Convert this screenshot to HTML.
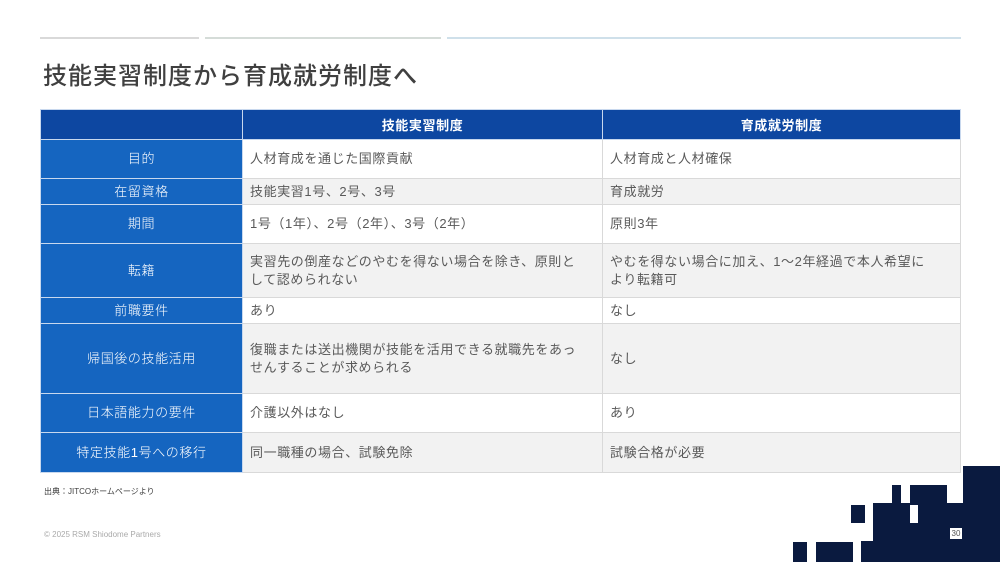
<!DOCTYPE html>
<html><head><meta charset="utf-8"><style>
*{margin:0;padding:0;box-sizing:border-box}
body{width:1000px;height:562px;overflow:hidden;background:#fff;position:relative;font-family:"Liberation Sans","Noto Sans CJK JP",sans-serif}
.ln{position:absolute;top:37px;height:2px}
h1{position:absolute;left:43px;top:56px;font-size:24px;font-weight:500;color:#404040;letter-spacing:1px}
table{position:absolute;left:40px;top:109px;border-collapse:collapse;width:921px;font-size:13px;color:#595959;letter-spacing:0.6px}
td{border:1px solid #d9d9d9;padding:0 7px;line-height:18px;font-weight:normal}
th{background:#0d47a1;color:#fff;font-weight:bold;font-size:13px;height:30px;border:1px solid #c8d8ee}
tr.g td{background:#f2f2f2}
tr td.h{background:#1565c0;color:#fff;text-align:center;width:202px;border-color:#c8d8ee;font-weight:300}
.n{position:absolute;background:#0a1a3f}
</style></head><body>
<div class="ln" style="left:40px;width:159px;background:#d9d9d9"></div>
<div class="ln" style="left:205px;width:236px;background:#d5dcd8"></div>
<div class="ln" style="left:447px;width:514px;background:#cfe0ea"></div>
<h1>技能実習制度から育成就労制度へ</h1>
<table>
<tr><th style="width:202px"></th><th style="width:360px">技能実習制度</th><th>育成就労制度</th></tr>
<tr style="height:39px"><td class="h">目的</td><td>人材育成を通じた国際貢献</td><td>人材育成と人材確保</td></tr>
<tr class="g" style="height:26px"><td class="h">在留資格</td><td>技能実習1号、2号、3号</td><td>育成就労</td></tr>
<tr style="height:39px"><td class="h">期間</td><td>1号（1年）、2号（2年）、3号（2年）</td><td>原則3年</td></tr>
<tr class="g" style="height:54px"><td class="h">転籍</td><td>実習先の倒産などのやむを得ない場合を除き、原則と<br>して認められない</td><td>やむを得ない場合に加え、1〜2年経過で本人希望に<br>より転籍可</td></tr>
<tr style="height:26px"><td class="h">前職要件</td><td>あり</td><td>なし</td></tr>
<tr class="g" style="height:70px"><td class="h">帰国後の技能活用</td><td>復職または送出機関が技能を活用できる就職先をあっ<br>せんすることが求められる</td><td>なし</td></tr>
<tr style="height:39px"><td class="h">日本語能力の要件</td><td>介護以外はなし</td><td>あり</td></tr>
<tr class="g" style="height:40px"><td class="h">特定技能1号への移行</td><td>同一職種の場合、試験免除</td><td>試験合格が必要</td></tr>
</table>
<div style="position:absolute;left:44px;top:486px;font-size:8px;color:#404040">出典：JITCOホームページより</div>
<div style="position:absolute;left:44px;top:530px;font-size:8px;color:#aaa">© 2025 RSM Shiodome Partners</div>
<div class="n" style="left:963px;top:466px;width:37px;height:40px"></div>
<div class="n" style="left:892px;top:485px;width:9px;height:20px"></div>
<div class="n" style="left:910px;top:485px;width:37px;height:20px"></div>
<div class="n" style="left:873px;top:503px;width:127px;height:40px"></div>
<div style="position:absolute;left:910px;top:505px;width:8px;height:18px;background:#fff"></div>
<div class="n" style="left:851px;top:505px;width:14px;height:18px"></div>
<div class="n" style="left:861px;top:541px;width:139px;height:21px"></div>
<div class="n" style="left:793px;top:542px;width:14px;height:20px"></div>
<div class="n" style="left:816px;top:542px;width:37px;height:20px"></div>
<div style="position:absolute;left:950px;top:528px;width:12px;height:11px;background:#fff;font-size:8px;color:#555;line-height:11px;text-align:center">30</div>
</body></html>
